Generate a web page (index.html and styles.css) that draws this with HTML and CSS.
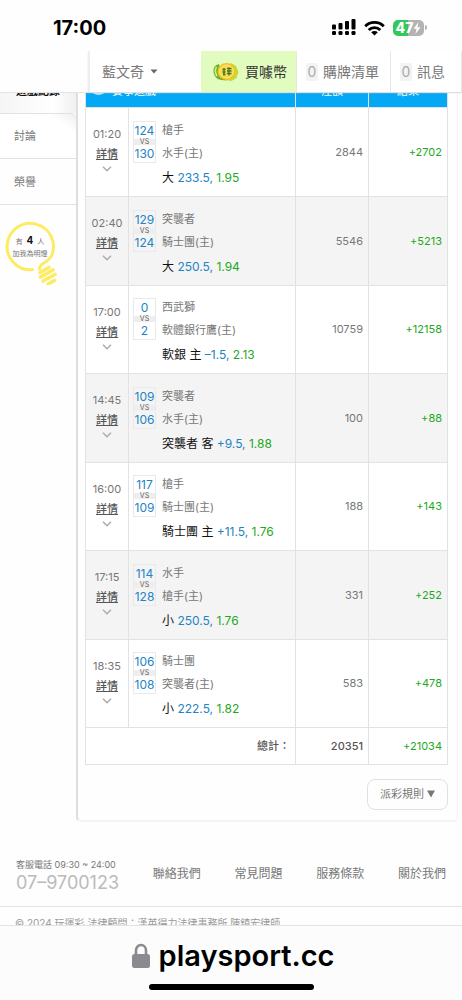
FILE: index.html
```
<!DOCTYPE html>
<html lang="zh-Hant">
<head>
<meta charset="utf-8">
<meta name="viewport" content="width=device-width, initial-scale=1">
<title>遊戲紀錄</title>
<link rel="stylesheet" href="styles.css">
</head>
<body>
<div class="status">
  <span class="clock">17:00</span>
  <span class="indicators">
    <svg width="25" height="17" viewBox="0 0 25 17" fill="#000"><rect x="1" y="5.500" width="4" height="5" rx="1"/><rect x="7.500" y="4" width="4" height="6.500" rx="1"/><rect x="14" y="2" width="4" height="8.500" rx="1"/><rect x="20.500" y="0" width="4" height="10.500" rx="1"/><rect x="1" y="12" width="4" height="4" rx="1.300"/><rect x="7.500" y="12" width="4" height="4" rx="1.300"/><rect x="14" y="12" width="4" height="4" rx="1.300"/><rect x="20.500" y="12" width="4" height="4" rx="1.300"/></svg>
    <svg width="21" height="16" viewBox="0 0 21 16" fill="none" stroke="#000" stroke-width="2.800"><path d="M1.200 6.200a13.300 13.300 0 0 1 18.600 0"/><path d="M4.700 9.900a8.300 8.300 0 0 1 11.600 0"/><path d="M10.500 15.500L7.200 12.300a4.700 4.700 0 0 1 6.600 0z" fill="#000" stroke="none"/></svg>
    <span class="battery"><span class="cell">47<svg width="8" height="12" viewBox="0 0 8 12"><path d="M5.500 0L.500 6.800h3L2.500 12 7.500 5.200h-3z" fill="#fff"/></svg></span></span>
  </span>
</div>
<nav class="topnav">
  <button class="nav-item user">藍文奇<svg width="8" height="5" viewBox="0 0 8 5"><path d="M0.500 0.500h7L4 4.500z" fill="#666"/></svg></button>
  <a class="nav-item buy" href="#"><svg width="26" height="20" viewBox="0 0 26 20"><path d="M6 2Q0 3 .500 10q1 7 8 8L14 18.500 8 10z" fill="#6db32e"/><path d="M18 1l5 3 2.500 6-2 6-5 3-6-1z" fill="#c3d93a"/><path d="M3.500 5Q1 9 4 14" fill="none" stroke="#d5ef8e" stroke-width="1.500"/><ellipse cx="13.500" cy="9.500" rx="9" ry="8.500" fill="#f5c21c"/><ellipse cx="13.500" cy="9.500" rx="7" ry="6.500" fill="#fbd84c" stroke="#fbea80"/><path d="M9.500 7.500h3M9.500 10h3M10 12.500h2.500M14 6.500h4.500M14 9h4.500M14 11.500h4.500M11 6v7.500M16 5.500v8" stroke="#43762b" stroke-width="1.300"/></svg>買噱幣</a>
  <a class="nav-item list" href="#"><span class="count">0</span>購牌清單</a>
  <a class="nav-item msg" href="#"><span class="count">0</span>訊息</a>
</nav>
<main class="layout">
  <aside class="side">
    <a class="side-current" href="#"><span class="cut">遊戲紀錄</span></a>
    <a class="side-link first" href="#">討論</a>
    <a class="side-link" href="#">榮譽</a>
    <div class="bulb">
      <svg width="60" height="66" viewBox="0 0 60 66" fill="none" stroke="#fdec62" stroke-linecap="round"><path stroke-width="3" d="M32.500 50.700A23.200 23.200 0 1 1 51.500 37Q49 41 44 44Q39.500 46.500 39.500 50"/><path stroke-width="3.600" d="M40 53.500l9-5M40.500 58l12.500-7M43 62l12-6.500M48 65l6.500-3.500"/></svg>
      <p class="bulb-text">有 <b>4</b> 人<br>加我為明燈</p>
    </div>
  </aside>
  <section class="panel">
    <table class="bets">
      <colgroup><col class="c-time"><col><col class="c-stake"><col class="c-result"></colgroup>
      <thead><tr>
        <th colspan="2"><span class="cut left"><svg width="15" height="12" viewBox="0 0 15 12"><ellipse cx="7.500" cy="5" rx="7" ry="5" fill="#b9e5fc"/><path d="M1 5q6.500 5 13 0" fill="none" stroke="#4bb9f2"/></svg>賽事遊戲</span></th>
        <th><span class="cut">注額</span></th><th><span class="cut">結果</span></th>
      </tr></thead>
      <tbody>
        <tr><td class="time">01:20<a href="#">詳情</a><svg class="chev" viewBox="0 0 10 6"><path d="M1 .800l4 4 4-4"/></svg></td><td><div class="game"><div class="score"><span>124</span><i>VS</i><span>130</span></div><div class="teams"><span>槍手</span><span>水手(主)</span></div><p class="pick">大 <em>233.5,</em> <strong>1.95</strong></p></div></td><td class="num">2844</td><td class="num win">+2702</td></tr>
        <tr><td class="time">02:40<a href="#">詳情</a><svg class="chev" viewBox="0 0 10 6"><path d="M1 .800l4 4 4-4"/></svg></td><td><div class="game"><div class="score"><span>129</span><i>VS</i><span>124</span></div><div class="teams"><span>突襲者</span><span>騎士團(主)</span></div><p class="pick">大 <em>250.5,</em> <strong>1.94</strong></p></div></td><td class="num">5546</td><td class="num win">+5213</td></tr>
        <tr><td class="time">17:00<a href="#">詳情</a><svg class="chev" viewBox="0 0 10 6"><path d="M1 .800l4 4 4-4"/></svg></td><td><div class="game"><div class="score"><span>0</span><i>VS</i><span>2</span></div><div class="teams"><span>西武獅</span><span>軟體銀行鷹(主)</span></div><p class="pick">軟銀 主 <em>–1.5,</em> <strong>2.13</strong></p></div></td><td class="num">10759</td><td class="num win">+12158</td></tr>
        <tr><td class="time">14:45<a href="#">詳情</a><svg class="chev" viewBox="0 0 10 6"><path d="M1 .800l4 4 4-4"/></svg></td><td><div class="game"><div class="score"><span>109</span><i>VS</i><span>106</span></div><div class="teams"><span>突襲者</span><span>水手(主)</span></div><p class="pick">突襲者 客 <em>+9.5,</em> <strong>1.88</strong></p></div></td><td class="num">100</td><td class="num win">+88</td></tr>
        <tr><td class="time">16:00<a href="#">詳情</a><svg class="chev" viewBox="0 0 10 6"><path d="M1 .800l4 4 4-4"/></svg></td><td><div class="game"><div class="score"><span>117</span><i>VS</i><span>109</span></div><div class="teams"><span>槍手</span><span>騎士團(主)</span></div><p class="pick">騎士團 主 <em>+11.5,</em> <strong>1.76</strong></p></div></td><td class="num">188</td><td class="num win">+143</td></tr>
        <tr><td class="time">17:15<a href="#">詳情</a><svg class="chev" viewBox="0 0 10 6"><path d="M1 .800l4 4 4-4"/></svg></td><td><div class="game"><div class="score"><span>114</span><i>VS</i><span>128</span></div><div class="teams"><span>水手</span><span>槍手(主)</span></div><p class="pick">小 <em>250.5,</em> <strong>1.76</strong></p></div></td><td class="num">331</td><td class="num win">+252</td></tr>
        <tr><td class="time">18:35<a href="#">詳情</a><svg class="chev" viewBox="0 0 10 6"><path d="M1 .800l4 4 4-4"/></svg></td><td><div class="game"><div class="score"><span>106</span><i>VS</i><span>108</span></div><div class="teams"><span>騎士團</span><span>突襲者(主)</span></div><p class="pick">小 <em>222.5,</em> <strong>1.82</strong></p></div></td><td class="num">583</td><td class="num win">+478</td></tr>
      </tbody>
      <tfoot><tr><td colspan="2" class="num total">總計：</td><td class="num total">20351</td><td class="num win">+21034</td></tr></tfoot>
    </table>
    <button class="rules">派彩規則<svg width="8" height="8" viewBox="0 0 8 8"><path d="M0 .500h8L4 7.500z" fill="#777"/></svg></button>
  </section>
</main>
<footer class="footer">
  <div class="links">
    <div class="phone"><small>客服電話 <span>09:30 ~ 24:00</span></small><span class="tel">07–9700123</span></div>
    <a href="#">聯絡我們</a><a href="#">常見問題</a><a href="#">服務條款</a><a href="#">關於我們</a>
  </div>
  <p class="copy">© 2024 玩運彩 法律顧問：漢英得力法律事務所 陳鎮宏律師</p>
</footer>
<div class="browser">
  <div class="address"><svg width="18" height="26" viewBox="0 0 18 26"><path d="M4 12V7.500a5 5.500 0 0 1 10 0V12" fill="none" stroke="#8b8a90" stroke-width="2.600"/><rect x="0" y="11" width="18" height="14" rx="2.500" fill="#8b8a90"/></svg>playsport.cc</div>
  <div class="home"></div>
</div>
</body>
</html>
```
FILE: styles.css
```
* { box-sizing: border-box; }
body {
  margin: 0;
  min-height: 100vh;
  display: flex;
  flex-direction: column;
  background: #fefefe;
  color: #777;
  font: 11px/20px Inter, "Noto Sans CJK TC", sans-serif;
}
a { color: inherit; text-decoration: none; }
button { font: inherit; color: inherit; background: none; border: 0; padding: 0; }
p { margin: 0; }
svg { flex: none; }

.status {
  display: flex;
  justify-content: space-between;
  align-items: center;
  height: 51px;
  padding: 4px 35px 0 53px;
  color: #000;
}
.clock { font: 700 20px/24px Inter, sans-serif; }
.indicators { display: flex; align-items: center; gap: 8px; }
.battery { display: flex; align-items: center; }
.battery::after { content: ""; width: 2px; height: 5px; margin-left: 1px; background: #b5b5b5; border-radius: 0 2px 2px 0; }
.cell {
  display: flex;
  align-items: center;
  justify-content: center;
  width: 31px;
  height: 16px;
  border-radius: 5px;
  background: linear-gradient(90deg, #34c759 48%, #b3b3b3 48%);
  color: #fff;
  font: 800 14px/16px Inter, sans-serif;
}

.topnav {
  display: flex;
  height: 41px;
  margin-left: 88px;
  background: #fff;
  box-shadow: 0 1px 1px #ddd;
  position: relative;
  clip-path: inset(0 0 -2px -88px);
}
.topnav::before { content: ""; position: absolute; left: -88px; bottom: -1px; width: 88px; height: 1px; background: #e3e3e3; }
.nav-item {
  display: flex;
  align-items: center;
  font-size: 14px;
  border-right: 1px solid #e6e6e6;
  white-space: nowrap;
}
.user { flex: 1; gap: 6px; padding-left: 12px; border-left: 2px solid #eee; border-right: 0; }
.buy { gap: 6px; padding: 0 9px 0 12px; background: #e1fcbe; color: #333; }
.list { gap: 5px; padding: 0 11px 0 9px; }
.msg { gap: 5px; padding: 0 16px 0 9px; }
.count { width: 12px; line-height: 18px; text-align: center; background: #f3f3f3; border-radius: 2px; color: #aaa; }

.layout { display: flex; align-items: stretch; }
.side { width: 76px; flex: none; }
.cut { display: flex; align-items: flex-end; justify-content: center; height: 5px; line-height: 11px; overflow: hidden; }
.cut.left { justify-content: flex-start; gap: 6px; padding-left: 5px; }
.side-current {
  display: block;
  height: 21px;
  font-weight: 700;
  color: #111;
  background: linear-gradient(90deg, #f5f5f5, #fff 70%, #f0f0f0);
}
.side-link {
  display: flex;
  align-items: center;
  height: 46px;
  padding-left: 14px;
  border-bottom: 1px solid #e2e2e2;
}
.side-link.first { border-top: 1px solid #e2e2e2; border-top-right-radius: 5px; background: linear-gradient(215deg, #eee, #fff 16px); }
.bulb { display: grid; padding-top: 14px; }
.bulb > * { grid-area: 1 / 1; }
.bulb-text { width: 60px; padding-top: 15px; font-size: 7px; line-height: 12px; text-align: center; }
.bulb b { color: #111; font: 700 10px/12px Inter, sans-serif; margin: 0 2px; }

.panel {
  flex: 1;
  min-width: 0;
  display: flex;
  flex-direction: column;
  margin-right: 4px;
  padding: 0 9px 10px 7px;
  border: solid #f4f4f4;
  border-width: 0 1px 2px 2px;
  border-left-color: #dedede;
  border-radius: 0 0 5px 5px;
}
.bets { width: 100%; border-collapse: collapse; table-layout: fixed; background: #fff; }
.c-time { width: 43px; }
.c-stake { width: 73px; }
.c-result { width: 79px; }
.bets td, .bets th { border: 1px solid #e2e2e2; padding: 0; }
.bets th { height: 15px; vertical-align: top; border-top: 0; background: #04a9f5; color: #fff; font-weight: 400; }
.bets tbody tr { height: 88px; }
.bets tbody tr:first-child, .bets tbody tr:nth-child(even) { height: 89px; }
.bets tbody tr:nth-child(even) { background: #f4f4f4; }
.bets tfoot tr { height: 37px; }
.bets .time { text-align: center; vertical-align: top; padding-top: 16px; }
.time a { display: block; font-weight: 500; color: #555; text-decoration: underline; }
.chev { display: block; width: 10px; height: 6px; margin: 2px auto 0; fill: none; stroke: #aaa; stroke-width: 1.4; }
.game {
  display: grid;
  grid-template-columns: 23px 1fr;
  column-gap: 6px;
  padding: 5px 0 0 4px;
}
.score {
  display: flex;
  flex-direction: column;
  align-items: stretch;
  border: 1px solid #e9e9e9;
  text-align: center;
  color: #2383c4;
  font-size: 12px;
}
.score span { line-height: 17px; }
.score i { font-size: 7px; font-style: normal; line-height: 6px; background: #eee; color: #666; }
.teams { display: flex; flex-direction: column; justify-content: space-between; line-height: 19px; }
.pick { grid-column: 2; margin-top: 5px; font-size: 12px; color: #111; white-space: nowrap; }
.pick em, .pick strong { font-style: normal; font-weight: 400; }
.pick em { color: #2383c4; }
.pick strong { color: #1da81d; }
.bets .num { text-align: right; padding-right: 5px; }
.bets .win { color: #1da81d; }
.bets .total { color: #555; font-weight: 500; }
.rules {
  display: flex;
  align-items: center;
  justify-content: center;
  gap: 3px;
  align-self: flex-end;
  margin-top: 14px;
  padding: 0 12px;
  height: 31px;
  border: 1px solid #e0e0e0;
  border-radius: 8px;
}

.footer { padding-top: 34px; }
.links { display: flex; justify-content: space-between; align-items: center; padding: 0 16px 14px; font-size: 12px; border-bottom: 1px solid #e3e3e3; }
.phone { display: flex; flex-direction: column; }
.phone small { font-size: 9px; line-height: 18px; }
.tel { font-size: 18px; line-height: 18px; color: #bbb; }
.copy { height: 18px; padding: 6px 15px 0; overflow: hidden; font-size: 10px; line-height: 20px; color: #999; white-space: nowrap; }

.browser {
  flex: 1;
  display: flex;
  flex-direction: column;
  align-items: center;
  gap: 10px;
  padding: 12px 0 10px;
  border-top: 1px solid #e3e3e3;
  background: #fcfcfc;
}
.address { display: flex; align-items: center; gap: 9px; padding-left: 4px; color: #000; font: 600 29px/36px Inter, sans-serif; }
.home { width: 165px; height: 6px; border-radius: 3px; background: #000; }
```
